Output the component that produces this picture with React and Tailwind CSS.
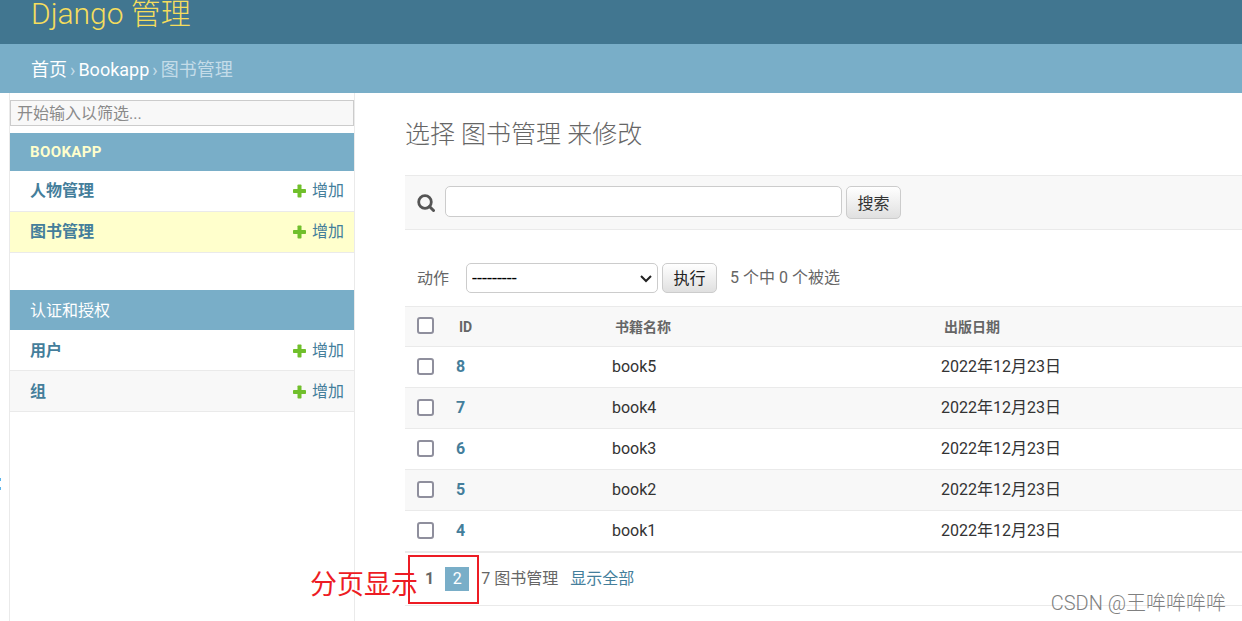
import React, { useState } from 'react'

const sections = [
  { name: 'BOOKAPP', captionClass: 'h-[38px] text-[15px] font-bold text-[#ffffcc] tracking-wide',
    models: [{ name: '人物管理', rowClass: 'bg-white' }, { name: '图书管理', rowClass: 'bg-[#ffffcc]' }] },
  { name: '认证和授权', captionClass: 'h-10 pt-0.5 text-base text-white',
    models: [{ name: '用户', rowClass: 'bg-white pt-px' }, { name: '组', rowClass: 'bg-[#f8f8f8] pt-px' }] },
]

const books = [
  { id: 8, title: 'book5', date: '2022年12月23日' },
  { id: 7, title: 'book4', date: '2022年12月23日' },
  { id: 6, title: 'book3', date: '2022年12月23日' },
  { id: 5, title: 'book2', date: '2022年12月23日' },
  { id: 4, title: 'book1', date: '2022年12月23日' },
]

export default function App() {
  return (
    <div className="relative min-h-screen flex flex-col overflow-hidden bg-white text-base text-[#333] font-['Roboto','Noto_Sans_CJK_SC',sans-serif]">
      <header className="h-11 flex items-center pl-[31px] pb-4 bg-[#417690]">
        <a href="#" className="text-[30px] leading-7 font-light text-[#f5dd5d]">Django 管理</a>
      </header>
      <nav aria-label="breadcrumbs" className="h-[49px] flex items-center gap-[3px] pl-[31px] pt-0.5 bg-[#79aec8] text-lg text-[#c4dce8]">
        <a href="#" className="text-white">首页</a>
        <span>›</span>
        <a href="#" className="text-white">Bookapp</a>
        <span>›</span>
        <span>图书管理</span>
      </nav>
      <div className="flex-1 flex">
        <NavToggle />
        <Sidebar />
        <ChangeList />
      </div>
      <div className="absolute right-4 bottom-1 text-xl leading-7 font-light text-[#808080]">CSDN @王哞哞哞哞</div>
    </div>
  )
}

function NavToggle() {
  return (
    <button type="button" aria-label="切换导航" className="w-[9px] shrink-0 flex items-start pt-[384px]">
      <svg width="1" height="14" viewBox="0 0 1 14" fill="#58b4ec">
        <rect y="1" width="1" height="3" />
        <rect y="10" width="1" height="3" />
      </svg>
    </button>
  )
}

function Sidebar() {
  return (
    <aside className="w-[346px] shrink-0 pt-[7px] border-x border-[#eaeaea]">
      <input
        type="text"
        aria-label="筛选导航项"
        placeholder="开始输入以筛选..."
        className="block w-full h-[26px] mb-[7px] px-1.5 border border-[#ccc] bg-[#f8f8f8] text-base placeholder:text-[#8a8a8a]"
      />
      {sections.map(section => (
        <section key={section.name} className="mb-[37px]">
          <h2 className={`flex items-center pl-5 bg-[#79aec8] ${section.captionClass}`}>{section.name}</h2>
          {section.models.map(model => (
            <div key={model.name} className={`h-[41px] flex items-center justify-between pl-5 pr-2.5 border-b border-[#eaeaea] text-[#447e9b] ${model.rowClass}`}>
              <a href="#" className="font-bold">{model.name}</a>
              <a href="#" className="flex items-center gap-1.5">
                <PlusIcon />
                增加
              </a>
            </div>
          ))}
        </section>
      ))}
    </aside>
  )
}

function ChangeList() {
  const [query, setQuery] = useState('')
  const [selected, setSelected] = useState([])

  const toggle = id => setSelected(selected.includes(id) ? selected.filter(s => s !== id) : [...selected, id])
  const toggleAll = () => setSelected(selected.length === books.length ? [] : books.map(b => b.id))

  return (
    <main className="flex-1 min-w-0 pl-[50px]">
      <h1 className="pt-[26px] pb-6 text-[25px] leading-8 font-light text-[#666]">选择 图书管理 来修改</h1>

      <form className="h-[55px] flex items-start gap-1 pl-3 pt-2.5 border-y border-[#eaeaea] bg-[#f8f8f8]" onSubmit={e => e.preventDefault()}>
        <label htmlFor="searchbar" className="w-6 pt-2">
          <SearchIcon />
        </label>
        <input
          id="searchbar"
          type="text"
          aria-label="搜索图书"
          value={query}
          onChange={e => setQuery(e.target.value)}
          className="w-[397px] h-[31px] px-1.5 border border-[#ccc] rounded-[5px] bg-white"
        />
        <button type="submit" className="w-[55px] h-[33px] pt-0.5 border border-[#ccc] rounded-[5px] bg-linear-to-b from-white to-[#e0e0e0]">搜索</button>
      </form>

      <div className="flex items-center pl-3 pt-[33px] pb-[13px] text-[#666]">
        <label htmlFor="action" className="mr-[17px] pt-0.5">动作</label>
        <span className="relative mr-1">
          <select id="action" className="block w-48 h-[30px] pl-[5px] appearance-none border border-[#ccc] rounded-[5px] bg-white text-lg leading-6 text-black">
            <option>---------</option>
            <option>删除所选的 图书管理</option>
          </select>
          <svg className="absolute right-1.5 top-3 pointer-events-none" width="12" height="8" viewBox="0 0 12 8" fill="none" stroke="#222" strokeWidth="2">
            <path d="M1 1l5 5 5-5" />
          </svg>
        </span>
        <button type="button" className="w-[55px] h-[30px] pt-0.5 mr-[13px] border border-[#ccc] rounded-[5px] bg-linear-to-b from-white to-[#e0e0e0] text-[#222]">执行</button>
        <span>5 个中 {selected.length} 个被选</span>
      </div>

      <table className="w-full table-fixed border-separate border-spacing-0">
        <thead>
          <tr className="h-[41px] bg-[#f8f8f8] text-sm text-left text-[#666]">
            <th className="w-[41px] pl-3 pb-0.5 border-y border-[#eaeaea]">
              <Checkbox label="全选" checked={selected.length === books.length} onChange={toggleAll} />
            </th>
            <th className="w-[156px] pl-[13px] border-y border-[#eaeaea]">ID</th>
            <th className="w-[329px] pl-[13px] border-y border-[#eaeaea]">书籍名称</th>
            <th className="pl-[13px] border-y border-[#eaeaea]">出版日期</th>
          </tr>
        </thead>
        <tbody>
          {books.map(book => (
            <tr key={book.id} className="h-[41px] even:bg-[#f8f8f8]">
              <td className="pl-3 pb-0.5 border-b border-[#eaeaea]">
                <Checkbox label={`选择 ${book.title}`} checked={selected.includes(book.id)} onChange={() => toggle(book.id)} />
              </td>
              <td className="pl-2.5 border-b border-[#eaeaea]">
                <a href="#" className="font-bold text-[#447e9b]">{book.id}</a>
              </td>
              <td className="pl-2.5 border-b border-[#eaeaea]">{book.title}</td>
              <td className="pl-2.5 border-b border-[#eaeaea]">{book.date}</td>
            </tr>
          ))}
        </tbody>
      </table>

      <div className="relative h-[54px] flex items-center pl-5 border-y border-[#eaeaea] text-[#666]">
        <span className="mr-[11px] font-bold">1</span>
        <a href="#" className="w-6 h-6 mr-3 flex items-center justify-center bg-[#79aec8] text-white">2</a>
        <span className="mr-3">7 图书管理</span>
        <a href="#" className="text-[#447e9b]">显示全部</a>
        <div className="absolute left-[3px] top-0.5 w-[71px] h-[49px] border-2 border-[#ed1c24]" />
        <div className="absolute -left-[95px] top-4 text-[27px] leading-8 text-[#ed1c24] whitespace-nowrap">分页显示</div>
      </div>
    </main>
  )
}

function Checkbox({ label, checked, onChange }) {
  return (
    <input
      type="checkbox"
      aria-label={label}
      checked={checked}
      onChange={onChange}
      className="block size-[17px] appearance-none border-2 border-[#8f8f9d] rounded-[3px] bg-white checked:bg-[#447e9b]"
    />
  )
}

function PlusIcon() {
  return (
    <svg width="13" height="14" viewBox="0 0 13 14" fill="#70bf2b">
      <rect x="4.500" y="0.500" width="4" height="13" rx="0.800" />
      <rect x="0" y="5" width="13" height="4" rx="0.800" />
    </svg>
  )
}

function SearchIcon() {
  return (
    <svg width="18" height="18" viewBox="0 0 18 18" fill="none" stroke="#555">
      <circle cx="8" cy="8" r="6.300" strokeWidth="2.800" />
      <path d="M12.500 12.500l4 4" strokeWidth="3" strokeLinecap="round" />
    </svg>
  )
}
